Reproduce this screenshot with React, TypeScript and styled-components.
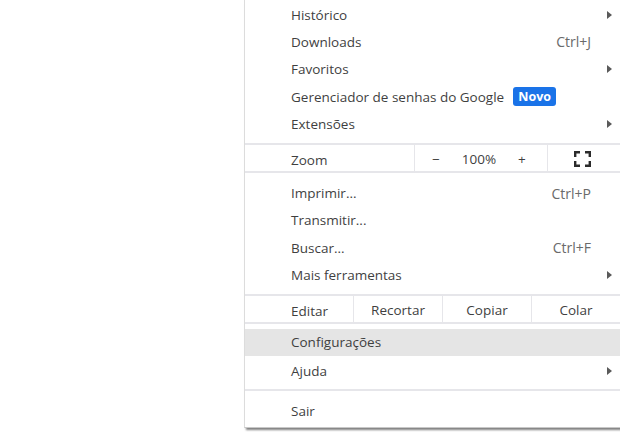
import React from 'react';
import styled, { createGlobalStyle } from 'styled-components';

const GlobalStyle = createGlobalStyle`
  html, body {
    margin: 0;
    padding: 0;
    width: 620px;
    height: 432px;
    overflow: hidden;
    background: #fff;
  }
`;

const Page = styled.div`
  width: 620px;
  height: 432px;
  padding-left: 244px;
  box-sizing: border-box;
  overflow: hidden;
  font-family: 'Open Sans', 'Noto Sans', sans-serif;
  font-size: 13.5px;
  color: #3f3f3f;
`;

const Menu = styled.div`
  width: 400px;
  height: 428px;
  box-sizing: border-box;
  padding-top: 1px;
  background: #fff;
  border-left: 1px solid #dcdcdc;
  border-bottom: 1px solid #c8c8c8;
  box-shadow: 1px 3px 2px -1px rgba(0, 0, 0, 0.5);
`;

const Row = styled.div<{ $active?: boolean }>`
  display: flex;
  align-items: center;
  height: 27.3px;
  width: 375px;
  padding-left: 46px;
  box-sizing: border-box;
  background: ${props => (props.$active ? '#e5e5e5' : 'transparent')};
`;

const Label = styled.span`
  white-space: nowrap;
`;

const Shortcut = styled.span`
  margin-left: auto;
  margin-right: 29px;
  color: #6a6a6a;
  font-size: 14px;
`;

const Arrow = styled.span`
  margin-left: auto;
  margin-right: 8px;
  width: 0;
  height: 0;
  border-left: 5px solid #5a5a5a;
  border-top: 4px solid transparent;
  border-bottom: 4px solid transparent;
`;

const Badge = styled.span`
  margin-left: 9px;
  width: 43px;
  height: 19px;
  line-height: 19px;
  text-align: center;
  border-radius: 3px;
  background: #1a73e8;
  color: #fff;
  font-size: 12.5px;
  font-weight: 700;
`;

const Gap = styled.div<{ $height: number }>`
  height: ${props => props.$height}px;
`;

const Separator = styled.div`
  height: 2px;
  background: #e6e6ea;
`;

const ToolRow = styled.div`
  display: flex;
  height: 30px;
  box-sizing: border-box;
  border-top: 2px solid #e6e6ea;
  border-bottom: 2px solid #e6e6ea;
`;

const ToolCell = styled.div<{ $width: number; $first?: boolean }>`
  display: flex;
  align-items: center;
  justify-content: ${props => (props.$first ? 'flex-start' : 'center')};
  width: ${props => props.$width}px;
  padding-left: ${props => (props.$first ? 46 : 0)}px;
  padding-top: ${props => (props.$first ? 4 : 2)}px;
  box-sizing: border-box;
  border-left: ${props => (props.$first ? 'none' : '1px solid #e6e6ea')};
`;

const ZoomCell = styled(ToolCell)`
  justify-content: flex-start;
  padding-left: 17px;
  gap: 22px;
`;

const FullIcon = styled.svg`
  display: block;
  width: 17px;
  height: 16px;
  margin-left: -3px;
`;

const App = () => {
  return (
    <Page>
      <GlobalStyle />
      <Menu>
        <Row>
          <Label>Histórico</Label>
          <Arrow />
        </Row>
        <Row>
          <Label>Downloads</Label>
          <Shortcut>Ctrl+J</Shortcut>
        </Row>
        <Row>
          <Label>Favoritos</Label>
          <Arrow />
        </Row>
        <Row>
          <Label>Gerenciador de senhas do Google</Label>
          <Badge>Novo</Badge>
        </Row>
        <Row>
          <Label>Extensões</Label>
          <Arrow />
        </Row>
        <Gap $height={6} />
        <ToolRow>
          <ToolCell $first $width={169}>Zoom</ToolCell>
          <ZoomCell $width={133}>
            <span>−</span>
            <span>100%</span>
            <span>+</span>
          </ZoomCell>
          <ToolCell $width={73}>
            <FullIcon viewBox="0 0 17 16">
              <path
                d="M1.2 6V1.2H6M11 1.2h4.8V6M1.2 10v4.8H6M11 14.8h4.8V10"
                fill="none"
                stroke="#2b2b2b"
                strokeWidth="2.4"
              />
            </FullIcon>
          </ToolCell>
        </ToolRow>
        <Gap $height={6} />
        <Row>
          <Label>Imprimir...</Label>
          <Shortcut>Ctrl+P</Shortcut>
        </Row>
        <Row>
          <Label>Transmitir...</Label>
        </Row>
        <Row>
          <Label>Buscar...</Label>
          <Shortcut>Ctrl+F</Shortcut>
        </Row>
        <Row>
          <Label>Mais ferramentas</Label>
          <Arrow />
        </Row>
        <Gap $height={5} />
        <ToolRow>
          <ToolCell $first $width={108}>Editar</ToolCell>
          <ToolCell $width={89}>Recortar</ToolCell>
          <ToolCell $width={89}>Copiar</ToolCell>
          <ToolCell $width={89}>Colar</ToolCell>
        </ToolRow>
        <Gap $height={5} />
        <Row $active>
          <Label>Configurações</Label>
        </Row>
        <Gap $height={1} />
        <Row>
          <Label>Ajuda</Label>
          <Arrow />
        </Row>
        <Gap $height={5} />
        <Separator />
        <Gap $height={6} />
        <Row>
          <Label>Sair</Label>
        </Row>
      </Menu>
    </Page>
  );
};

export default App;
